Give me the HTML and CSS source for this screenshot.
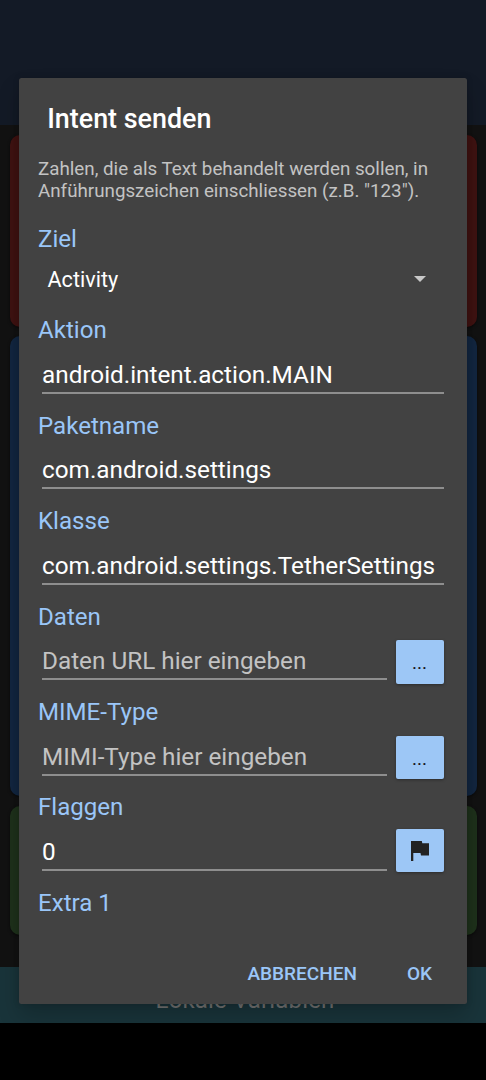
FILE: index.html
```html
<!DOCTYPE html>
<html lang="de">
<head>
<meta charset="utf-8">
<title>Intent senden</title>
<link rel="stylesheet" href="styles.css">
</head>
<body>
<div class="screen">
  <div class="app">
    <div class="app-header"></div>
    <div class="cards">
      <div class="card red"></div>
      <div class="card blue"></div>
      <div class="card green"></div>
    </div>
    <div class="variables"><span class="variables-text">Lokale Variablen</span></div>
    <div class="navbar"></div>
  </div>
  <div class="dialog">
    <h1 class="title">Intent senden</h1>
    <p class="hint">Zahlen, die als Text behandelt werden sollen, in<br>Anführungszeichen einschliessen (z.B. "123").</p>
    <div class="form">
      <div class="label">Ziel</div>
      <div class="spinner"><span>Activity</span><svg class="arrow" viewBox="0 0 12 6"><path d="M0 0h12L6 6z" fill="#c8c8c8"/></svg></div>
      <div class="label">Aktion</div>
      <div class="row"><div class="input">android.intent.action.MAIN</div></div>
      <div class="label">Paketname</div>
      <div class="row"><div class="input">com.android.settings</div></div>
      <div class="label">Klasse</div>
      <div class="row"><div class="input">com.android.settings.TetherSettings</div></div>
      <div class="label">Daten</div>
      <div class="row"><div class="input placeholder">Daten URL hier eingeben</div><div class="button">...</div></div>
      <div class="label">MIME-Type</div>
      <div class="row"><div class="input placeholder">MIMI-Type hier eingeben</div><div class="button">...</div></div>
      <div class="label">Flaggen</div>
      <div class="row"><div class="input">0</div><div class="button flag"><svg class="flag-icon" viewBox="0 0 18 20"><path d="M0 0h10.8l.5 2.3H18v12.1h-8l-.5-2.4H2.3v8H0z" fill="#222"/></svg></div></div>
      <div class="label">Extra 1</div>
    </div>
    <div class="actions"><span>ABBRECHEN</span><span>OK</span></div>
  </div>
</div>
</body>
</html>
```
FILE: styles.css
```css
* { box-sizing: border-box; }
body { margin: 0; background: #000; font-family: Roboto, sans-serif; }
.screen { position: relative; width: 486px; height: 1080px; overflow: hidden; }
.app { display: flex; flex-direction: column; height: 1080px; background: #121212; }
.app-header { height: 125px; background: #131a26; }
.cards { height: 842px; padding: 10px 9.5px 0; display: flex; flex-direction: column; gap: 9.5px; }
.card { border-radius: 10px; box-shadow: 0 1px 3px rgba(0,0,0,.5); }
.red { height: 191.5px; background: #3f1211; }
.blue { height: 460px; background: #122640; }
.green { height: 129px; background: #1e311b; }
.variables { height: 56px; background: #19343a; color: #747474; font-size: 24px; line-height: 28px; padding-top: 18.5px; text-align: center; }
.variables-text { letter-spacing: .15px; padding-left: 4px; }
.navbar { flex: 1; background: #000; z-index: 2; }
.dialog { position: absolute; left: 19px; top: 78px; width: 448px; height: 926px; padding: 0 23.5px 0 19px; background: #424242; border-radius: 2.5px; box-shadow: 0 12px 22px rgba(0,0,0,.2), 0 0 6px rgba(0,0,0,.15); display: flex; flex-direction: column; clip-path: inset(-30px -19px -19px -19px); }
.title { margin: 0; height: 80px; padding: 25px 0 0 9.2px; font-size: 26.9px; line-height: 33px; font-weight: 500; color: #fff; white-space: nowrap; }
.hint { margin: 0; height: 67px; font-size: 18.77px; line-height: 22px; color: #c3c3c3; white-space: nowrap; }
.form { flex: 1; padding-top: .4px; }
.label { height: 28px; line-height: 28px; font-size: 24.1px; color: #9ac6f8; white-space: nowrap; }
.spinner { height: 63px; display: flex; align-items: flex-start; justify-content: space-between; padding: 12.6px 18px 0 9.5px; font-size: 21.6px; line-height: 28px; color: #fff; }
.arrow { width: 12px; height: 6px; margin-top: 10px; }
.row { height: 67.4px; display: flex; gap: 9px; padding-left: 4px; }
.input { flex: 1; height: 49.7px; padding: 16.6px 0 0; border-bottom: 2px solid #8e8e8e; font-size: 24.3px; line-height: 28px; color: #fff; white-space: nowrap; }
.placeholder { color: #c3c3c3; }
.button { width: 48px; height: 43.5px; margin-top: 9.6px; border-radius: 2px; background: #9dc7f6; box-shadow: 0 1px 3px rgba(0,0,0,.35); font-size: 19px; line-height: 45px; text-align: center; color: #151515; }
.flag { height: 43px; margin-top: 7.6px; display: flex; align-items: center; justify-content: center; }
.flag-icon { width: 18px; height: 20px; margin: 2px 0 0 1px; }
.actions { height: 44px; display: flex; justify-content: flex-end; gap: 50px; padding: .5px 11.5px 0 0; font-size: 19px; line-height: 26px; font-weight: 500; color: #9ac6f8; }
```
